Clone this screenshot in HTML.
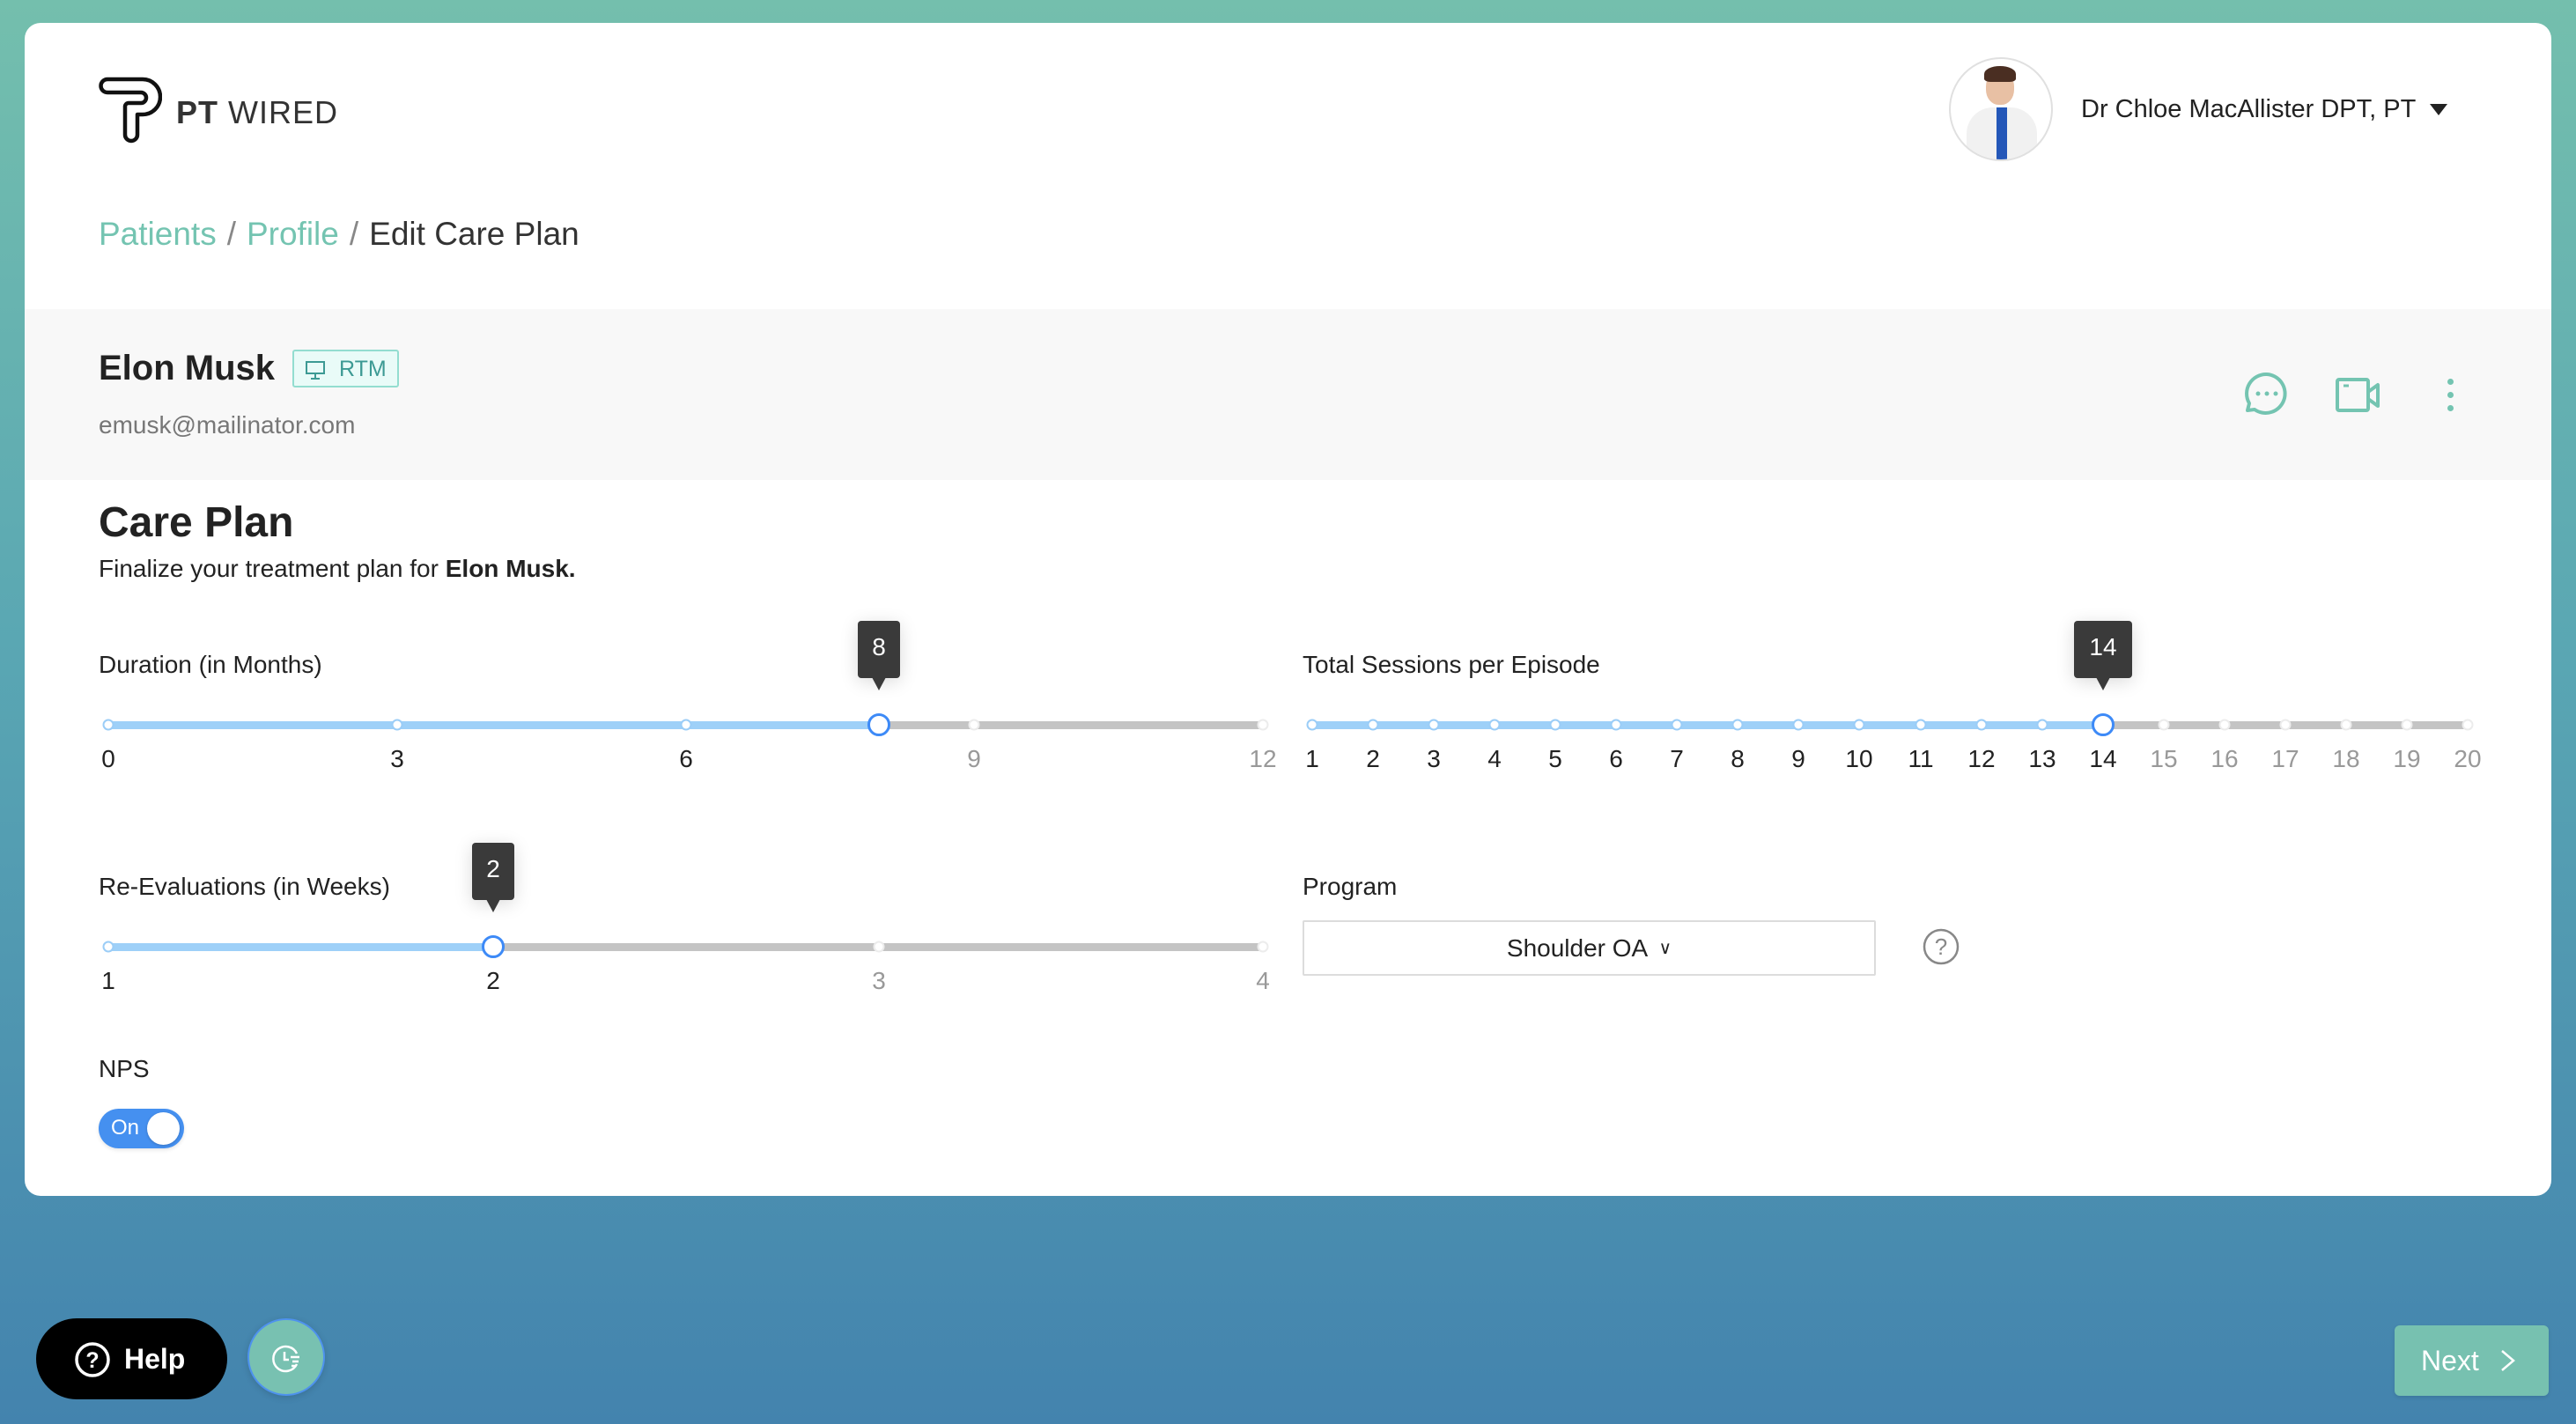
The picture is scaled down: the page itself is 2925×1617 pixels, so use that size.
<!DOCTYPE html>
<html><head><meta charset="utf-8"><style>
*{margin:0;padding:0;box-sizing:border-box}
body{width:2925px;height:1617px;overflow:hidden;position:relative;font-family:"Liberation Sans",Arial,sans-serif;background:linear-gradient(180deg,#74bfad 0%,#5aa7b3 45%,#4383ae 100%);color:#222}
.a{position:absolute}
.card{left:28px;top:26px;width:2869px;height:1332px;background:#fff;border-radius:18px;overflow:hidden}
.band{left:0;top:325px;width:100%;height:194px;background:#f8f8f8}
.t{position:absolute;white-space:nowrap}
.track{position:absolute;height:9px;border-radius:5px}
.m{position:absolute;width:13px;height:13px;border-radius:50%;background:#fff;transform:translate(-50%,-50%)}
.on{border:2.5px solid #9bcdf7}.off{border:2.5px solid #ececec}
.h{position:absolute;width:26px;height:26px;border-radius:50%;background:#fff;border:3.5px solid #3d8af7;transform:translate(-50%,-50%)}
.lb{position:absolute;font-size:28px;transform:translateX(-50%);color:#222}
.lg{color:#999}
.tip{position:absolute;background:#3a3a3a;color:#fff;font-size:28px;text-align:center;border-radius:4px;box-shadow:0 4px 20px rgba(0,0,0,.15)}
.tip:after{content:"";position:absolute;left:50%;bottom:-14px;margin-left:-8px;border-left:8px solid transparent;border-right:8px solid transparent;border-top:15px solid #3a3a3a}
.sl{color:#888;margin:0 12px}
</style></head><body>
<div class="a card">
 <svg class="a" style="left:84px;top:61px" width="72" height="76" viewBox="0 0 72 76"><path d="M10 3 H50 A20 20 0 0 1 50 43 H44 V66 A7 7 0 0 1 30 66 V34 A4 4 0 0 1 34 30 H48 A6 6 0 0 0 48 18 H10 A7.5 7.5 0 0 1 10 3 Z" fill="none" stroke="#111" stroke-width="4.5" stroke-linejoin="round"/></svg>
 <div class="t" style="left:172px;top:81px;font-size:36px;color:#333;letter-spacing:1px"><b>PT</b> WIRED</div>
 <div class="t" style="left:84px;top:219px;font-size:37px;color:#333"><span style="color:#74c4b1">Patients</span><span class="sl">/</span><span style="color:#74c4b1">Profile</span><span class="sl">/</span>Edit Care Plan</div>
 <div class="a" style="left:2185px;top:39px;width:118px;height:118px;border-radius:50%;border:2px solid #e0e0e0;background:#fff;overflow:hidden">
  <div class="a" style="left:40px;top:14px;width:32px;height:38px;border-radius:45%;background:#e8c0a4"></div>
  <div class="a" style="left:38px;top:8px;width:36px;height:18px;border-radius:50% 50% 20% 20%;background:#4a2e22"></div>
  <div class="a" style="left:18px;top:55px;width:80px;height:70px;border-radius:30px 30px 0 0;background:#f1f1f1"></div>
  <div class="a" style="left:52px;top:55px;width:12px;height:60px;background:#2457b8"></div>
 </div>
 <div class="t" style="left:2335px;top:82px;font-size:29px;color:#222">Dr Chloe MacAllister DPT, PT</div>
 <div class="a" style="left:2731px;top:92px;width:0;height:0;border-left:10px solid transparent;border-right:10px solid transparent;border-top:13px solid #222"></div>
 <div class="a band"></div>
 <div class="t" style="left:84px;top:370px;font-size:40px;font-weight:bold;color:#222">Elon Musk</div>
 <div class="a" style="left:304px;top:371px;width:121px;height:43px;background:#e9fbf8;border:2px solid #93ddd0;border-radius:3px"></div>
 <svg class="a" style="left:318px;top:383px" width="26" height="24" viewBox="0 0 26 24"><rect x="2" y="2" width="20" height="13" fill="none" stroke="#3d9a94" stroke-width="2"/><path d="M12 15v6M7 21h10" stroke="#3d9a94" stroke-width="2"/></svg>
 <div class="t" style="left:357px;top:379px;font-size:25px;color:#3d9a94">RTM</div>
 <div class="t" style="left:84px;top:441px;font-size:28px;color:#777">emusk@mailinator.com</div>
 <svg class="a" style="left:2520px;top:396px" width="52" height="52" viewBox="0 0 52 52"><path d="M26 3 A22 22 0 1 1 12 43 L4 44 L6 36 A22 22 0 0 1 26 3 Z" fill="none" stroke="#74c4b1" stroke-width="4" stroke-linejoin="round"/><circle cx="16" cy="25" r="2.5" fill="#74c4b1"/><circle cx="26" cy="25" r="2.5" fill="#74c4b1"/><circle cx="36" cy="25" r="2.5" fill="#74c4b1"/></svg>
 <svg class="a" style="left:2624px;top:402px" width="52" height="42" viewBox="0 0 52 42"><rect x="2" y="3" width="35" height="35" rx="2" fill="none" stroke="#74c4b1" stroke-width="4"/><path d="M37 17 L48 9 V33 L37 25" fill="none" stroke="#74c4b1" stroke-width="4" stroke-linejoin="round"/><path d="M9 10h6" stroke="#74c4b1" stroke-width="3"/></svg>
 <div class="a" style="left:2751px;top:404px;width:7px;height:7px;border-radius:50%;background:#74c4b1"></div>
 <div class="a" style="left:2751px;top:419px;width:7px;height:7px;border-radius:50%;background:#74c4b1"></div>
 <div class="a" style="left:2751px;top:434px;width:7px;height:7px;border-radius:50%;background:#74c4b1"></div>

 <div class="t" style="left:84px;top:540px;font-size:48px;font-weight:bold;color:#222">Care Plan</div>
 <div class="t" style="left:84px;top:604px;font-size:28px;color:#222">Finalize your treatment plan for <b>Elon Musk.</b></div>

 <div class="t" style="left:84px;top:713px;font-size:28px">Duration (in Months)</div>
 <div class="track" style="left:95px;top:793px;width:1311px;background:#c4c4c4"></div>
 <div class="track" style="left:95px;top:793px;width:875px;background:#9ed0f8"></div>
 <div class="m on" style="left:95px;top:797px"></div><div class="m on" style="left:423px;top:797px"></div><div class="m on" style="left:751px;top:797px"></div><div class="m off" style="left:1078px;top:797px"></div><div class="m off" style="left:1406px;top:797px"></div>
 <div class="h" style="left:970px;top:797px"></div>
 <div class="tip" style="left:946px;top:679px;width:48px;height:65px;line-height:60px">8</div>
 <div class="lb" style="left:95px;top:820px">0</div><div class="lb" style="left:423px;top:820px">3</div><div class="lb" style="left:751px;top:820px">6</div><div class="lb lg" style="left:1078px;top:820px">9</div><div class="lb lg" style="left:1406px;top:820px">12</div>

 <div class="t" style="left:1451px;top:713px;font-size:28px">Total Sessions per Episode</div>
 <div class="track" style="left:1462px;top:793px;width:1312px;background:#c4c4c4"></div>
 <div class="track" style="left:1462px;top:793px;width:898px;background:#9ed0f8"></div>
 <div class="m on" style="left:1462px;top:797px"></div><div class="m on" style="left:1531px;top:797px"></div><div class="m on" style="left:1600px;top:797px"></div><div class="m on" style="left:1669px;top:797px"></div><div class="m on" style="left:1738px;top:797px"></div><div class="m on" style="left:1807px;top:797px"></div><div class="m on" style="left:1876px;top:797px"></div><div class="m on" style="left:1945px;top:797px"></div><div class="m on" style="left:2014px;top:797px"></div><div class="m on" style="left:2083px;top:797px"></div><div class="m on" style="left:2153px;top:797px"></div><div class="m on" style="left:2222px;top:797px"></div><div class="m on" style="left:2291px;top:797px"></div><div class="m off" style="left:2429px;top:797px"></div><div class="m off" style="left:2498px;top:797px"></div><div class="m off" style="left:2567px;top:797px"></div><div class="m off" style="left:2636px;top:797px"></div><div class="m off" style="left:2705px;top:797px"></div><div class="m off" style="left:2774px;top:797px"></div>
 <div class="h" style="left:2360px;top:797px"></div>
 <div class="tip" style="left:2327px;top:679px;width:66px;height:65px;line-height:60px">14</div>
 <div class="lb" style="left:1462px;top:820px">1</div><div class="lb" style="left:1531px;top:820px">2</div><div class="lb" style="left:1600px;top:820px">3</div><div class="lb" style="left:1669px;top:820px">4</div><div class="lb" style="left:1738px;top:820px">5</div><div class="lb" style="left:1807px;top:820px">6</div><div class="lb" style="left:1876px;top:820px">7</div><div class="lb" style="left:1945px;top:820px">8</div><div class="lb" style="left:2014px;top:820px">9</div><div class="lb" style="left:2083px;top:820px">10</div><div class="lb" style="left:2153px;top:820px">11</div><div class="lb" style="left:2222px;top:820px">12</div><div class="lb" style="left:2291px;top:820px">13</div><div class="lb" style="left:2360px;top:820px">14</div><div class="lb lg" style="left:2429px;top:820px">15</div><div class="lb lg" style="left:2498px;top:820px">16</div><div class="lb lg" style="left:2567px;top:820px">17</div><div class="lb lg" style="left:2636px;top:820px">18</div><div class="lb lg" style="left:2705px;top:820px">19</div><div class="lb lg" style="left:2774px;top:820px">20</div>

 <div class="t" style="left:84px;top:965px;font-size:28px">Re-Evaluations (in Weeks)</div>
 <div class="track" style="left:95px;top:1045px;width:1311px;background:#c4c4c4"></div>
 <div class="track" style="left:95px;top:1045px;width:437px;background:#9ed0f8"></div>
 <div class="m on" style="left:95px;top:1049px"></div><div class="m off" style="left:970px;top:1049px"></div><div class="m off" style="left:1406px;top:1049px"></div>
 <div class="h" style="left:532px;top:1049px"></div>
 <div class="tip" style="left:508px;top:931px;width:48px;height:65px;line-height:60px">2</div>
 <div class="lb" style="left:95px;top:1072px">1</div><div class="lb" style="left:532px;top:1072px">2</div><div class="lb lg" style="left:970px;top:1072px">3</div><div class="lb lg" style="left:1406px;top:1072px">4</div>

 <div class="t" style="left:1451px;top:965px;font-size:28px">Program</div>
 <div class="a" style="left:1451px;top:1019px;width:651px;height:63px;border:2px solid #dcdcdc;border-radius:2px;background:#fff;font-size:28px;text-align:center;line-height:59px">Shoulder OA <span style="font-size:20px;position:relative;top:-3px;margin-left:6px">&#8744;</span></div>
 <svg class="a" style="left:2154px;top:1027px" width="44" height="44" viewBox="0 0 44 44"><circle cx="22" cy="22" r="19" fill="none" stroke="#888" stroke-width="2.5"/><text x="22" y="31" text-anchor="middle" font-size="26" fill="#888" font-family="Liberation Sans">?</text></svg>

 <div class="t" style="left:84px;top:1172px;font-size:28px">NPS</div>
 <div class="a" style="left:84px;top:1233px;width:97px;height:45px;border-radius:23px;background:#4590f0;box-shadow:0 2px 4px rgba(0,0,0,.1)">
  <div class="t" style="left:14px;top:8px;font-size:24px;color:#fff">On</div>
  <div class="a" style="left:55px;top:4px;width:37px;height:37px;border-radius:50%;background:#fff;box-shadow:0 1px 3px rgba(0,0,0,.2)"></div>
 </div>
</div>

<div class="a" style="left:41px;top:1497px;width:217px;height:92px;border-radius:46px;background:#000"></div>
<svg class="a" style="left:84px;top:1523px" width="42" height="42" viewBox="0 0 42 42"><circle cx="21" cy="21" r="18" fill="none" stroke="#fff" stroke-width="3.5"/><text x="21" y="30" text-anchor="middle" font-size="25" font-weight="bold" fill="#fff" font-family="Liberation Sans">?</text></svg>
<div class="t" style="left:141px;top:1525px;font-size:32px;font-weight:bold;color:#fff">Help</div>
<div class="a" style="left:281px;top:1497px;width:88px;height:88px;border-radius:50%;background:#78c1b1;border:2px solid #4e92ee;box-shadow:0 2px 8px rgba(0,0,0,.15)"></div>
<svg class="a" style="left:305px;top:1523px" width="40" height="40" viewBox="0 0 40 40"><path d="M32 14 A14 14 0 1 0 32 26" fill="none" stroke="#fff" stroke-width="2.5"/><path d="M18 12v9h5M25 18h10M27 23h7M26 28h5" stroke="#fff" stroke-width="2.5" fill="none"/></svg>
<div class="a" style="left:2719px;top:1505px;width:175px;height:80px;border-radius:6px;background:#77c1b0;box-shadow:0 2px 4px rgba(0,0,0,.1)"></div>
<div class="t" style="left:2749px;top:1527px;font-size:32px;color:#fff">Next</div>
<svg class="a" style="left:2838px;top:1531px" width="20" height="28" viewBox="0 0 20 28"><path d="M3 3 L16 14 L3 25" fill="none" stroke="#fff" stroke-width="2.5"/></svg>
</body></html>
